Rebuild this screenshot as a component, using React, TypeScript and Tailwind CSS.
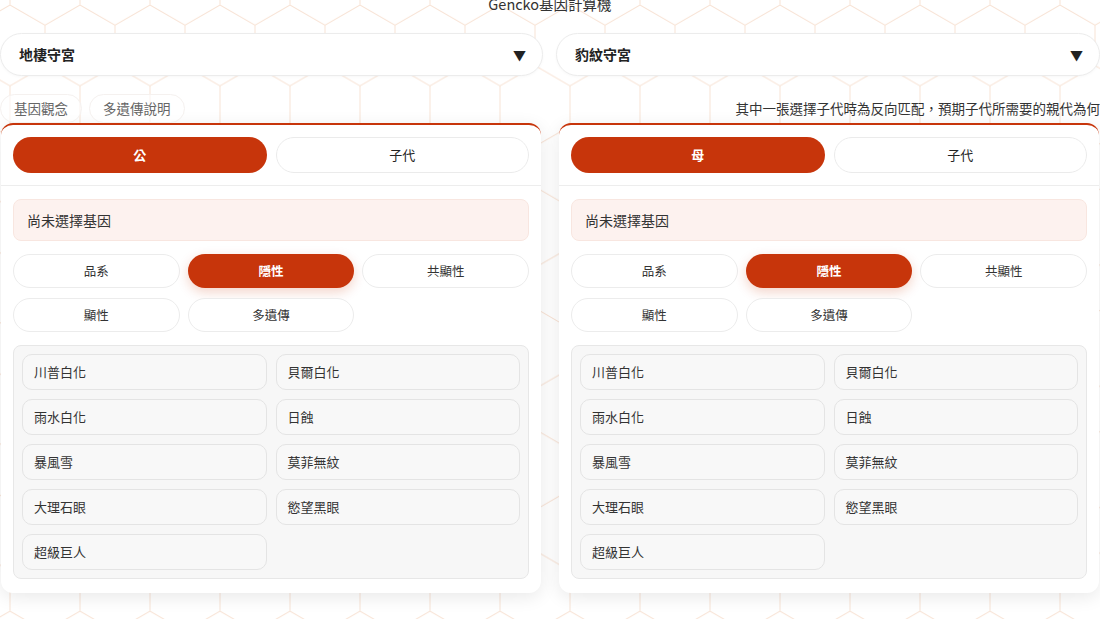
import { useState } from 'react'

const RED = 'bg-[#c7350b]'

const genes = ['川普白化', '貝爾白化', '雨水白化', '日蝕', '暴風雪', '莫菲無紋', '大理石眼', '慾望黑眼', '超級巨人']
const categories = ['品系', '隱性', '共顯性', '顯性', '多遺傳']

// faint honeycomb behind the page
function Honeycomb() {
  const s = 40.41
  const d = `M0,${s / 2} L35,0 L70,${s / 2} M0,${s / 2} V${(3 * s) / 2} L35,${2 * s} L70,${(3 * s) / 2} M35,${2 * s} V${3 * s} M70,${s / 2} V${(3 * s) / 2}`
  return (
    <svg className="pointer-events-none absolute inset-0 h-full w-full" aria-hidden>
      <defs>
        <pattern id="hex" width="70" height={3 * s} patternUnits="userSpaceOnUse" x="45" y="5">
          <path d={d} fill="none" stroke="#f8e3d5" strokeWidth="1" />
        </pattern>
      </defs>
      <rect width="100%" height="100%" fill="url(#hex)" />
    </svg>
  )
}

function Dropdown({ label }: { label: string }) {
  return (
    <div className="flex h-[43px] items-center justify-between rounded-full border border-[#ececec] bg-white pl-[18px] pr-[16px] shadow-[0_1px_3px_rgba(0,0,0,0.03)]">
      <span className="text-[14px] font-bold text-[#222]">{label}</span>
      <span className="text-[13px] text-[#222]">▼</span>
    </div>
  )
}

function CalcCard({ parent }: { parent: string }) {
  const [side, setSide] = useState(0)
  const [cat, setCat] = useState(1)
  return (
    <div className="overflow-hidden rounded-[12px] border-t-2 border-[#c7350b] bg-white shadow-[0_4px_18px_rgba(0,0,0,0.09)]">
      <div className="grid grid-cols-2 gap-[9px] border-b border-[#ededed] px-[12px] pb-[12px] pt-[12px]">
        {[parent, '子代'].map((t, i) => (
          <button
            key={t}
            onClick={() => setSide(i)}
            className={
              side === i
                ? `h-[36px] rounded-full ${RED} text-[13px] font-bold text-white`
                : 'h-[36px] rounded-full border border-[#ebebeb] bg-white text-[13px] text-[#222]'
            }
          >
            {t}
          </button>
        ))}
      </div>

      <div className="px-[12px] pb-[14px] pt-[13px]">
        <div className="flex h-[42px] items-center rounded-[8px] border border-[#f8e6e0] bg-[#fdf2ef] px-[13px] text-[14px] text-[#333]">
          尚未選擇基因
        </div>

        <div className="mt-[13px] grid grid-cols-3 gap-x-[8px] gap-y-[10px]">
          {categories.map((c, i) => (
            <button
              key={c}
              onClick={() => setCat(i)}
              className={
                cat === i
                  ? `h-[34px] rounded-full ${RED} text-[12.5px] font-bold text-white shadow-[0_4px_12px_rgba(199,53,11,0.22)]`
                  : 'h-[34px] rounded-full border border-[#ececec] bg-white text-[12.5px] text-[#333]'
              }
            >
              {c}
            </button>
          ))}
        </div>

        <div className="mt-[13px] grid grid-cols-2 gap-[9px] rounded-[8px] border border-[#e7e7e7] bg-[#f7f7f7] p-[8px]">
          {genes.map((g) => (
            <div
              key={g}
              className="flex h-[36px] items-center rounded-[10px] border border-[#e4e4e4] bg-[#f8f8f8] px-[11px] text-[13px] text-[#333]"
            >
              {g}
            </div>
          ))}
        </div>
      </div>
    </div>
  )
}

export default function App() {
  return (
    <div className="relative min-h-screen overflow-hidden bg-white font-['Noto_Sans_CJK_TC','Noto_Sans',sans-serif]">
      <Honeycomb />
      <div className="relative">
        <h1 className="-mt-[6px] h-5 text-center text-[14.5px] leading-5 text-[#333]">Gencko基因計算機</h1>

        <div className="mt-[19px] flex gap-[13px]">
          <div className="w-[543px] shrink-0">
            <Dropdown label="地棲守宮" />
            <div className="mt-[18px] flex gap-[7px]">
              <div className="flex h-[29px] items-center rounded-full border border-[#f5f1ef] bg-white/60 px-[13px] text-[13.5px] text-[#666]">
                基因觀念
              </div>
              <div className="flex h-[29px] items-center rounded-full border border-[#f5f1ef] bg-white/60 px-[13px] text-[13.5px] text-[#666]">
                多遺傳說明
              </div>
            </div>
            <div className="ml-px w-[540px]">
              <CalcCard parent="公" />
            </div>
          </div>

          <div className="w-[544px] shrink-0">
            <Dropdown label="豹紋守宮" />
            <div className="mt-[18px] flex h-[29px] items-center justify-end whitespace-nowrap text-[13.5px] text-[#333]">
              其中一張選擇子代時為反向匹配，預期子代所需要的親代為何
            </div>
            <div className="ml-[3px] w-[540px]">
              <CalcCard parent="母" />
            </div>
          </div>
        </div>
      </div>
    </div>
  )
}
